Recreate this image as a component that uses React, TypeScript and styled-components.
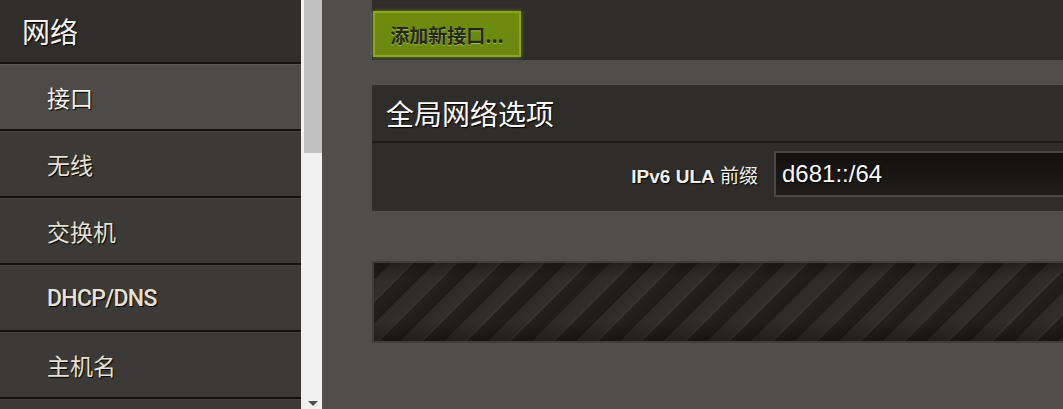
import React from 'react'
import styled, { createGlobalStyle } from 'styled-components'

const GlobalStyle = createGlobalStyle`
  html, body {
    margin: 0;
    padding: 0;
    background: #4f4e4a;
    font-family: "Liberation Sans", "Noto Sans CJK SC", sans-serif;
  }
`

const Page = styled.div`
  display: flex;
  height: 409px;
  overflow: hidden;
`
const Sidebar = styled.nav`
  width: 301px;
  flex: none;
  display: flex;
  flex-direction: column;
  background: #3a3834;
`
const MenuHeader = styled.div`
  height: 62px;
  flex: none;
  display: flex;
  align-items: center;
  padding-left: 22px;
  background: #312f2b;
  border-bottom: 2px solid #141310;
  color: #f4f2ec;
  font-size: 28px;
  text-shadow: 1px 1px 1px #000;
`
const MenuItem = styled.div<{ $active?: boolean; $latin?: boolean }>`
  height: 64px;
  flex: none;
  display: flex;
  align-items: center;
  padding-left: 47px;
  background: ${(p) => (p.$active ? '#4c4b47' : '#3c3a36')};
  border-top: 1px solid ${(p) => (p.$active ? '#5a5955' : '#46443f')};
  border-bottom: 2px solid #141310;
  color: ${(p) => (p.$active ? '#f6f4ee' : '#e6e1d3')};
  font-family: ${(p) => (p.$latin ? 'Roboto, "Liberation Sans", sans-serif' : 'inherit')};
  font-size: ${(p) => (p.$latin ? '23px' : '23px')};
  font-weight: ${(p) => (p.$latin ? 500 : 'normal')};
  letter-spacing: ${(p) => (p.$latin ? '-0.7px' : 'normal')};
  text-shadow: 1px 1px 1px #000;
`
const Scrollbar = styled.div`
  width: 21px;
  flex: none;
  display: flex;
  flex-direction: column;
  justify-content: space-between;
  align-items: center;
  background: #f1f1f1;
`
const Thumb = styled.div`
  width: 18px;
  height: 153px;
  margin-left: 2px;
  background: #c1c1c1;
`
const ArrowDown = styled.div`
  width: 0;
  height: 0;
  margin: 0 0 3px 2px;
  border-left: 5px solid transparent;
  border-right: 5px solid transparent;
  border-top: 5px solid #505050;
`
const Main = styled.main`
  flex: 1;
  min-width: 0;
  margin-right: -40px;
  display: flex;
  flex-direction: column;
  padding-left: 50px;
  background: #4f4e4a;
`
const ActionsPanel = styled.div`
  height: 49px;
  padding-top: 11px;
  background: #2f2d2a;
`
const GreenButton = styled.button`
  height: 46px;
  width: 148px;
  margin-left: 1px;
  padding: 0;
  border: 2px solid #8ba61f;
  background: linear-gradient(#6e8c0c, #6a880e);
  box-shadow: 0 0 4px rgba(150, 190, 30, 0.55);
  color: #26271e;
  font-family: "Noto Sans CJK SC", "Liberation Sans", sans-serif;
  font-size: 19px;
  font-weight: bold;
  text-shadow: 0 1px 1px rgba(200, 220, 140, 0.6);
`
const Section = styled.section`
  margin-top: 25px;
  background: #2f2d2a;
`
const SectionTitle = styled.h3`
  margin: 0;
  height: 56px;
  display: flex;
  align-items: center;
  padding-left: 14px;
  border-bottom: 2px solid #1d1c19;
  color: #fbfaf7;
  font-size: 28px;
  font-weight: normal;
  text-shadow: 1px 1px 1px #000;
`
const FieldRow = styled.div`
  display: grid;
  grid-template-columns: 386px 1fr;
  column-gap: 16px;
  align-items: center;
  padding: 8px 0 14px;
`
const FieldLabel = styled.label`
  text-align: right;
  color: #f2f0ea;
  font-size: 19px;
  text-shadow: 1px 1px 1px #000;
`
const LatinBold = styled.span`
  font-weight: bold;
`
const TextInput = styled.div`
  height: 42px;
  display: flex;
  align-items: center;
  padding-left: 6px;
  border: 2px solid #4b4945;
  background: linear-gradient(#121110, #1e1d1a);
  color: #fbfaf6;
  font-size: 24px;
  text-shadow: 1px 1px 1px #000;
`
const StripedBar = styled.div`
  margin-top: 50px;
  height: 78px;
  border: 2px solid #3f3e3a;
  background:
    linear-gradient(rgba(0, 0, 0, 0.25), rgba(0, 0, 0, 0) 20%, rgba(0, 0, 0, 0) 75%, rgba(0, 0, 0, 0.3)),
    repeating-linear-gradient(
      -45deg,
      #1e1d1a 0px,
      #22211e 14px,
      #3c3a35 15px,
      #302e2a 16px,
      #2d2b27 30px,
      #161513 31px
    );
`

const items = ['接口', '无线', '交换机', 'DHCP/DNS', '主机名', '']

const App = () => (
  <Page>
    <GlobalStyle />
    <Sidebar>
      <MenuHeader>网络</MenuHeader>
      {items.map((label, i) => (
        <MenuItem key={i} $active={i === 0} $latin={/^[A-Z]/.test(label)}>
          {label}
        </MenuItem>
      ))}
    </Sidebar>
    <Scrollbar>
      <Thumb />
      <ArrowDown />
    </Scrollbar>
    <Main>
      <ActionsPanel>
        <GreenButton>添加新接口...</GreenButton>
      </ActionsPanel>
      <Section>
        <SectionTitle>全局网络选项</SectionTitle>
        <FieldRow>
          <FieldLabel>
            <LatinBold>IPv6 ULA</LatinBold> 前缀
          </FieldLabel>
          <TextInput>d681::/64</TextInput>
        </FieldRow>
      </Section>
      <StripedBar />
    </Main>
  </Page>
)

export default App
